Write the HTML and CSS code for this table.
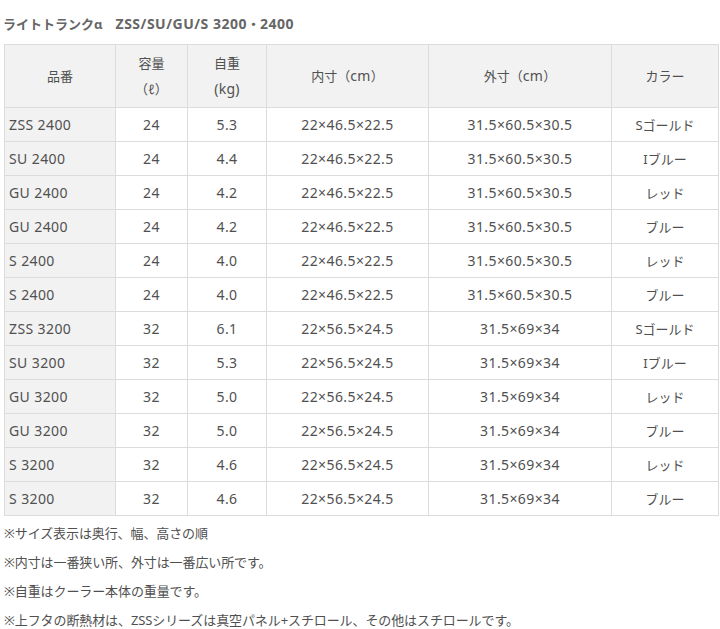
FILE: index.html
```html
<!DOCTYPE html>
<html lang="ja">
<head>
<meta charset="utf-8">
<title>ライトトランクα</title>
<link rel="stylesheet" href="styles.css">
</head>
<body>
<div class="page">
  <h2 class="title"><span class="t-jp">ライトトランクα</span>　<span class="t-en">ZSS/SU/GU/S 3200</span><span class="t-jp">・</span><span class="t-en">2400</span></h2>
  <table class="spec">
    <colgroup>
      <col class="c1"><col class="c2"><col class="c3"><col class="c4"><col class="c5"><col class="c6">
    </colgroup>
    <thead>
      <tr>
        <th>品番</th>
        <th>容量<br>（ℓ）</th>
        <th>自重<br><span class="en">(kg)</span></th>
        <th>内寸（<span class="en">cm</span>）</th>
        <th>外寸（<span class="en">cm</span>）</th>
        <th>カラー</th>
      </tr>
    </thead>
    <tbody>
      <tr><td class="name">ZSS 2400</td><td>24</td><td>5.3</td><td>22×46.5×22.5</td><td>31.5×60.5×30.5</td><td class="jp">Sゴールド</td></tr>
      <tr><td class="name">SU 2400</td><td>24</td><td>4.4</td><td>22×46.5×22.5</td><td>31.5×60.5×30.5</td><td class="jp">Iブルー</td></tr>
      <tr><td class="name">GU 2400</td><td>24</td><td>4.2</td><td>22×46.5×22.5</td><td>31.5×60.5×30.5</td><td class="jp">レッド</td></tr>
      <tr><td class="name">GU 2400</td><td>24</td><td>4.2</td><td>22×46.5×22.5</td><td>31.5×60.5×30.5</td><td class="jp">ブルー</td></tr>
      <tr><td class="name">S 2400</td><td>24</td><td>4.0</td><td>22×46.5×22.5</td><td>31.5×60.5×30.5</td><td class="jp">レッド</td></tr>
      <tr><td class="name">S 2400</td><td>24</td><td>4.0</td><td>22×46.5×22.5</td><td>31.5×60.5×30.5</td><td class="jp">ブルー</td></tr>
      <tr><td class="name">ZSS 3200</td><td>32</td><td>6.1</td><td>22×56.5×24.5</td><td>31.5×69×34</td><td class="jp">Sゴールド</td></tr>
      <tr><td class="name">SU 3200</td><td>32</td><td>5.3</td><td>22×56.5×24.5</td><td>31.5×69×34</td><td class="jp">Iブルー</td></tr>
      <tr><td class="name">GU 3200</td><td>32</td><td>5.0</td><td>22×56.5×24.5</td><td>31.5×69×34</td><td class="jp">レッド</td></tr>
      <tr><td class="name">GU 3200</td><td>32</td><td>5.0</td><td>22×56.5×24.5</td><td>31.5×69×34</td><td class="jp">ブルー</td></tr>
      <tr><td class="name">S 3200</td><td>32</td><td>4.6</td><td>22×56.5×24.5</td><td>31.5×69×34</td><td class="jp">レッド</td></tr>
      <tr><td class="name">S 3200</td><td>32</td><td>4.6</td><td>22×56.5×24.5</td><td>31.5×69×34</td><td class="jp">ブルー</td></tr>
    </tbody>
  </table>
  <div class="notes">
    <p>※サイズ表示は奥行、幅、高さの順</p>
    <p>※内寸は一番狭い所、外寸は一番広い所です。</p>
    <p>※自重はクーラー本体の重量です。</p>
    <p>※上フタの断熱材は、ZSSシリーズは真空パネル+スチロール、その他はスチロールです。</p>
  </div>
</div>
</body>
</html>
```
FILE: styles.css
```css
html, body {
  margin: 0;
  padding: 0;
  background: #fff;
}
body {
  font-family: "Noto Sans", "Noto Sans CJK JP", sans-serif;
  color: #505050;
  font-size: 13px;
}
.page {
  padding: 10px 2px 0 4px;
}
.title {
  margin: 0 0 6px -1px;
  font-size: 13px;
  line-height: 28px;
  font-weight: bold;
  color: #666;
}
.t-en {
  font-size: 14px;
  letter-spacing: 0.5px;
}
.en {
  font-size: 14px;
  letter-spacing: 0.3px;
}
.spec {
  border-collapse: collapse;
  table-layout: fixed;
  width: 714px;
}
.c1 { width: 111px; }
.c2 { width: 72px; }
.c3 { width: 79px; }
.c4 { width: 162px; }
.c5 { width: 183px; }
.c6 { width: 107px; }
.spec th, .spec td {
  border: 1px solid #dcdcdc;
  text-align: center;
  line-height: 26px;
  font-weight: normal;
  color: #505050;
}
.spec th {
  background: #f2f2f2;
  padding: 5px 4px 5px;
  height: 52px;
  box-sizing: content-box;
  font-size: 13px;
}
.spec td {
  padding: 4px 4px 3px;
  font-size: 14px;
  letter-spacing: 0.4px;
}
.spec td.jp {
  font-size: 13px;
  letter-spacing: 0;
}
.spec td.name {
  background: #f2f2f2;
  text-align: left;
  padding-left: 4px;
}
.notes {
  margin-top: 3px;
}
.notes p {
  margin: 0;
  line-height: 29px;
  font-size: 13px;
  color: #505050;
  letter-spacing: -0.1px;
}
```
